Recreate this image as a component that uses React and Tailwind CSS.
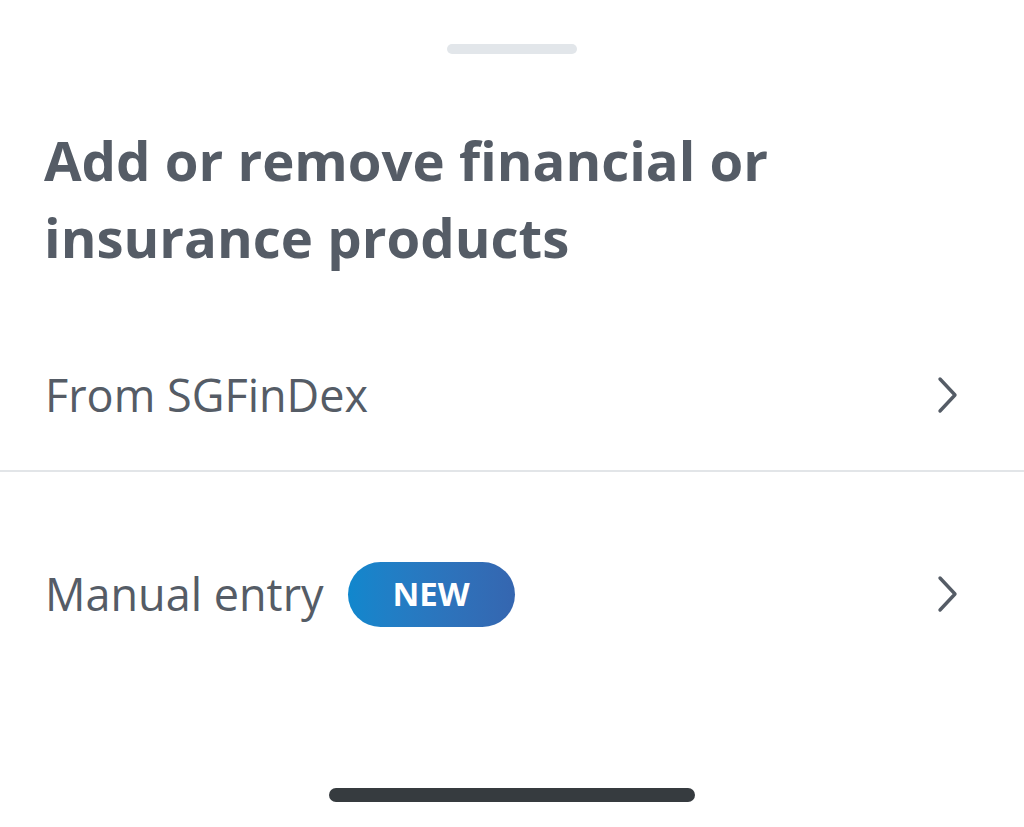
import React from "react";

function Chevron() {
  return (
    <svg width="24" height="38" viewBox="0 0 24 38" fill="none" className="shrink-0">
      <path d="M4 3 L19 19 L4 35" stroke="#555c66" strokeWidth="3.4" strokeLinecap="round" strokeLinejoin="round" />
    </svg>
  );
}

export default function App() {
  return (
    <div className="w-[1024px] h-[827px] bg-white flex flex-col relative overflow-hidden" style={{ fontFamily: '"Open Sans", sans-serif' }}>
      <div className="flex justify-center pt-[44px]">
        <div className="w-[130px] h-[10px] rounded-full bg-[#e2e6ea]" />
      </div>
      <h1 className="px-[44px] mt-[68px] text-[54.5px] leading-[77px] font-bold text-[#555c66]">
        Add or remove financial or<br />insurance products
      </h1>
      <div className="mt-[43px] flex items-center justify-between pl-[45px] pr-[64px] h-[151px]">
        <span className="text-[45px] text-[#555c66]">From SGFinDex</span>
        <Chevron />
      </div>
      <div className="h-[2px] bg-[#e2e5e8]" />
      <div className="flex items-center justify-between pl-[45px] pr-[64px] h-[244px]">
        <div className="flex items-center gap-[24px]">
          <span className="text-[45px] text-[#555c66]">Manual entry</span>
          <span className="h-[65px] w-[167px] rounded-full bg-gradient-to-r from-[#1087cd] to-[#3566b0] flex items-center justify-center text-white font-bold text-[33px]">NEW</span>
        </div>
        <Chevron />
      </div>
      <div className="flex-1" />
      <div className="flex justify-center pb-[25px]">
        <div className="w-[366px] h-[14px] rounded-full bg-[#363b3f]" />
      </div>
    </div>
  );
}
